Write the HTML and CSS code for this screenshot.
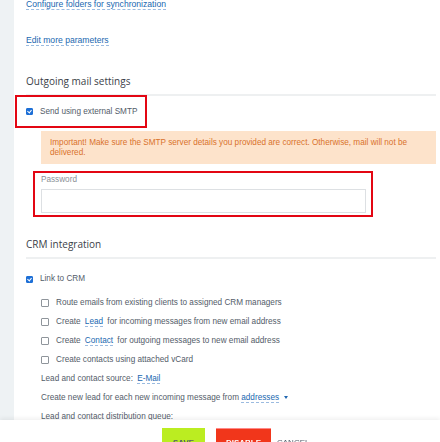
FILE: index.html
```html
<!DOCTYPE html>
<html lang="en">

<head>
    <meta charset="UTF-8">
    <title>Mailbox settings</title>
    <link rel="stylesheet" href="styles.css">
</head>

<body>

    <div class="page">
        <div class="panel">
            <!-- Top links -->
            <div class="link-row first"><a class="dotted" href="#">Configure folders for synchronization</a></div>
            <div class="link-row second"><a class="dotted" href="#">Edit more parameters</a></div>

            <!-- Outgoing mail -->
            <h3 class="section-title">Outgoing mail settings</h3>

            <div class="highlight smtp-box">
                <label class="check-row">
                    <span class="check checked"></span>
                    <span>Send using external SMTP</span>
                </label>
            </div>

            <div class="alert">
                Important! Make sure the SMTP server details you provided are correct. Otherwise, mail will not be delivered.
            </div>

            <div class="highlight password-box">
                <div class="field-label">Password</div>
                <input type="password" class="field-input">
            </div>

            <!-- CRM -->
            <h3 class="section-title crm-title">CRM integration</h3>

            <label class="check-row crm-link">
                <span class="check checked"></span>
                <span>Link to CRM</span>
            </label>

            <div class="options">
                <label class="check-row opt">
                    <span class="check"></span>
                    <span>Route emails from existing clients to assigned CRM managers</span>
                </label>
                <label class="check-row opt">
                    <span class="check"></span>
                    <span>Create <a class="dotted inline" href="#">Lead</a> for incoming messages from new email address</span>
                </label>
                <label class="check-row opt">
                    <span class="check"></span>
                    <span>Create <a class="dotted inline" href="#">Contact</a> for outgoing messages to new email address</span>
                </label>
                <label class="check-row opt">
                    <span class="check"></span>
                    <span>Create contacts using attached vCard</span>
                </label>
                <div class="opt text-row">Lead and contact source: <a class="dotted inline" href="#">E-Mail</a></div>
                <div class="opt text-row">Create new lead for each new incoming message from <a class="dotted" href="#">addresses</a> <span class="caret"></span></div>
                <div class="opt text-row">Lead and contact distribution queue:</div>
            </div>
        </div>
    </div>

    <!-- Sticky footer -->
    <div class="footer">
        <button type="button" class="btn btn-save">SAVE</button>
        <button type="button" class="btn btn-disable">DISABLE</button>
        <button type="button" class="btn btn-cancel">CANCEL</button>
    </div>

</body>

</html>
```

FILE: styles.css
```css
/* General */
body {
    margin: 0;
    background: #eef2f4;
    font-family: 'Liberation Sans', Arial, sans-serif;
    font-size: 8.2px;
    color: #535c69;
    overflow: hidden;
}

.page {
    height: 442px;
    padding-left: 14px;
}

.panel {
    background: #fff;
    height: 100%;
    padding: 0 4px 0 12px;
    margin-top: -1px;
}

/* Dotted links */
.dotted {
    color: #2067b0;
    text-decoration: none;
    border-bottom: 1px dashed #9bbbe0;
}

.dotted.inline {
    margin: 0 2px;
}

.link-row {
    line-height: 10px;
    font-size: 8.6px;
}

.link-row.second {
    margin-top: 26px;
}

/* Section titles */
.section-title {
    margin: 0;
    font-family: 'Open Sans', sans-serif;
    font-size: 10px;
    font-weight: normal;
    color: #3b4148;
    line-height: 16px;
    padding-top: 28px;
    padding-bottom: 5px;
    border-bottom: 2px solid #eef0f1;
}

/* Red highlight frames */
.highlight {
    border: 2px solid #e30613;
}

.smtp-box {
    width: 132px;
    margin-left: -11px;
    margin-top: -1px;
    padding: 0 0 0 9px;
    box-sizing: border-box;
    height: 33px;
    display: flex;
    align-items: center;
    white-space: nowrap;
}

/* Checkbox rows */
.check-row {
    display: flex;
    align-items: center;
    gap: 7px;
}

.check {
    width: 7px;
    height: 7px;
    border: 1px solid #a0a6ad;
    border-radius: 1px;
    box-sizing: border-box;
    flex: none;
    background: #fff;
}

.check.checked {
    background: #1d6fd6;
    border-color: #1d6fd6;
    position: relative;
}

.check.checked::after {
    content: "";
    position: absolute;
    left: 1px;
    top: 0;
    width: 2px;
    height: 3px;
    border: solid #fff;
    border-width: 0 1px 1px 0;
    transform: rotate(40deg);
}

/* Alert */
.alert {
    margin: 3px 0 0 15px;
    background: #fde3cb;
    color: #d9722c;
    line-height: 10px;
    padding: 7px 9px 6px;
}

/* Password field */
.password-box {
    margin: 7px 0 0 7px;
    width: 340px;
    padding: 2px 5px 4px 6px;
    box-sizing: border-box;
    height: 46px;
}

.field-label {
    color: #8a9096;
    line-height: 10px;
    margin-bottom: 4px;
}

.field-input {
    display: block;
    width: 325px;
    height: 24px;
    box-sizing: border-box;
    border: 1px solid #dde0e3;
    outline: none;
}

/* CRM */
.crm-title {
    padding-top: 19px;
}

.crm-link {
    margin-top: 15px;
    line-height: 10px;
}

.options {
    padding-left: 15px;
    margin-top: 14px;
}

.opt {
    line-height: 10px;
    margin-bottom: 9px;
}

.opt .check {
    width: 8px;
    height: 8px;
    border-color: #8f959b;
}

.caret {
    display: inline-block;
    width: 0;
    height: 0;
    border-left: 2.5px solid transparent;
    border-right: 2.5px solid transparent;
    border-top: 3px solid #2067b0;
    margin-left: 3px;
    vertical-align: 1px;
}

/* Footer */
.footer {
    position: fixed;
    left: 0;
    right: 0;
    bottom: 0;
    height: 22px;
    background: #fff;
    box-shadow: 0 -2px 4px rgba(0, 0, 0, 0.06);
    display: flex;
    align-items: flex-start;
    padding: 8px 0 0 162px;
    box-sizing: border-box;
    gap: 11px;
}

.btn {
    font-family: 'Liberation Sans', Arial, sans-serif;
    font-size: 8px;
    font-weight: bold;
    border: none;
    height: 26px;
    padding: 3px 0 0;
    line-height: 10px;
    display: block;
    cursor: pointer;
}

.btn-save {
    width: 43px;
    background: #bbed21;
    color: #535c69;
}

.btn-disable {
    width: 55px;
    background: #f1361b;
    color: #fff;
    box-shadow: inset 0 1px 0 #f88;
}

.btn-cancel {
    background: none;
    color: #535c69;
    font-weight: normal;
    margin-left: -5px;
}
```
